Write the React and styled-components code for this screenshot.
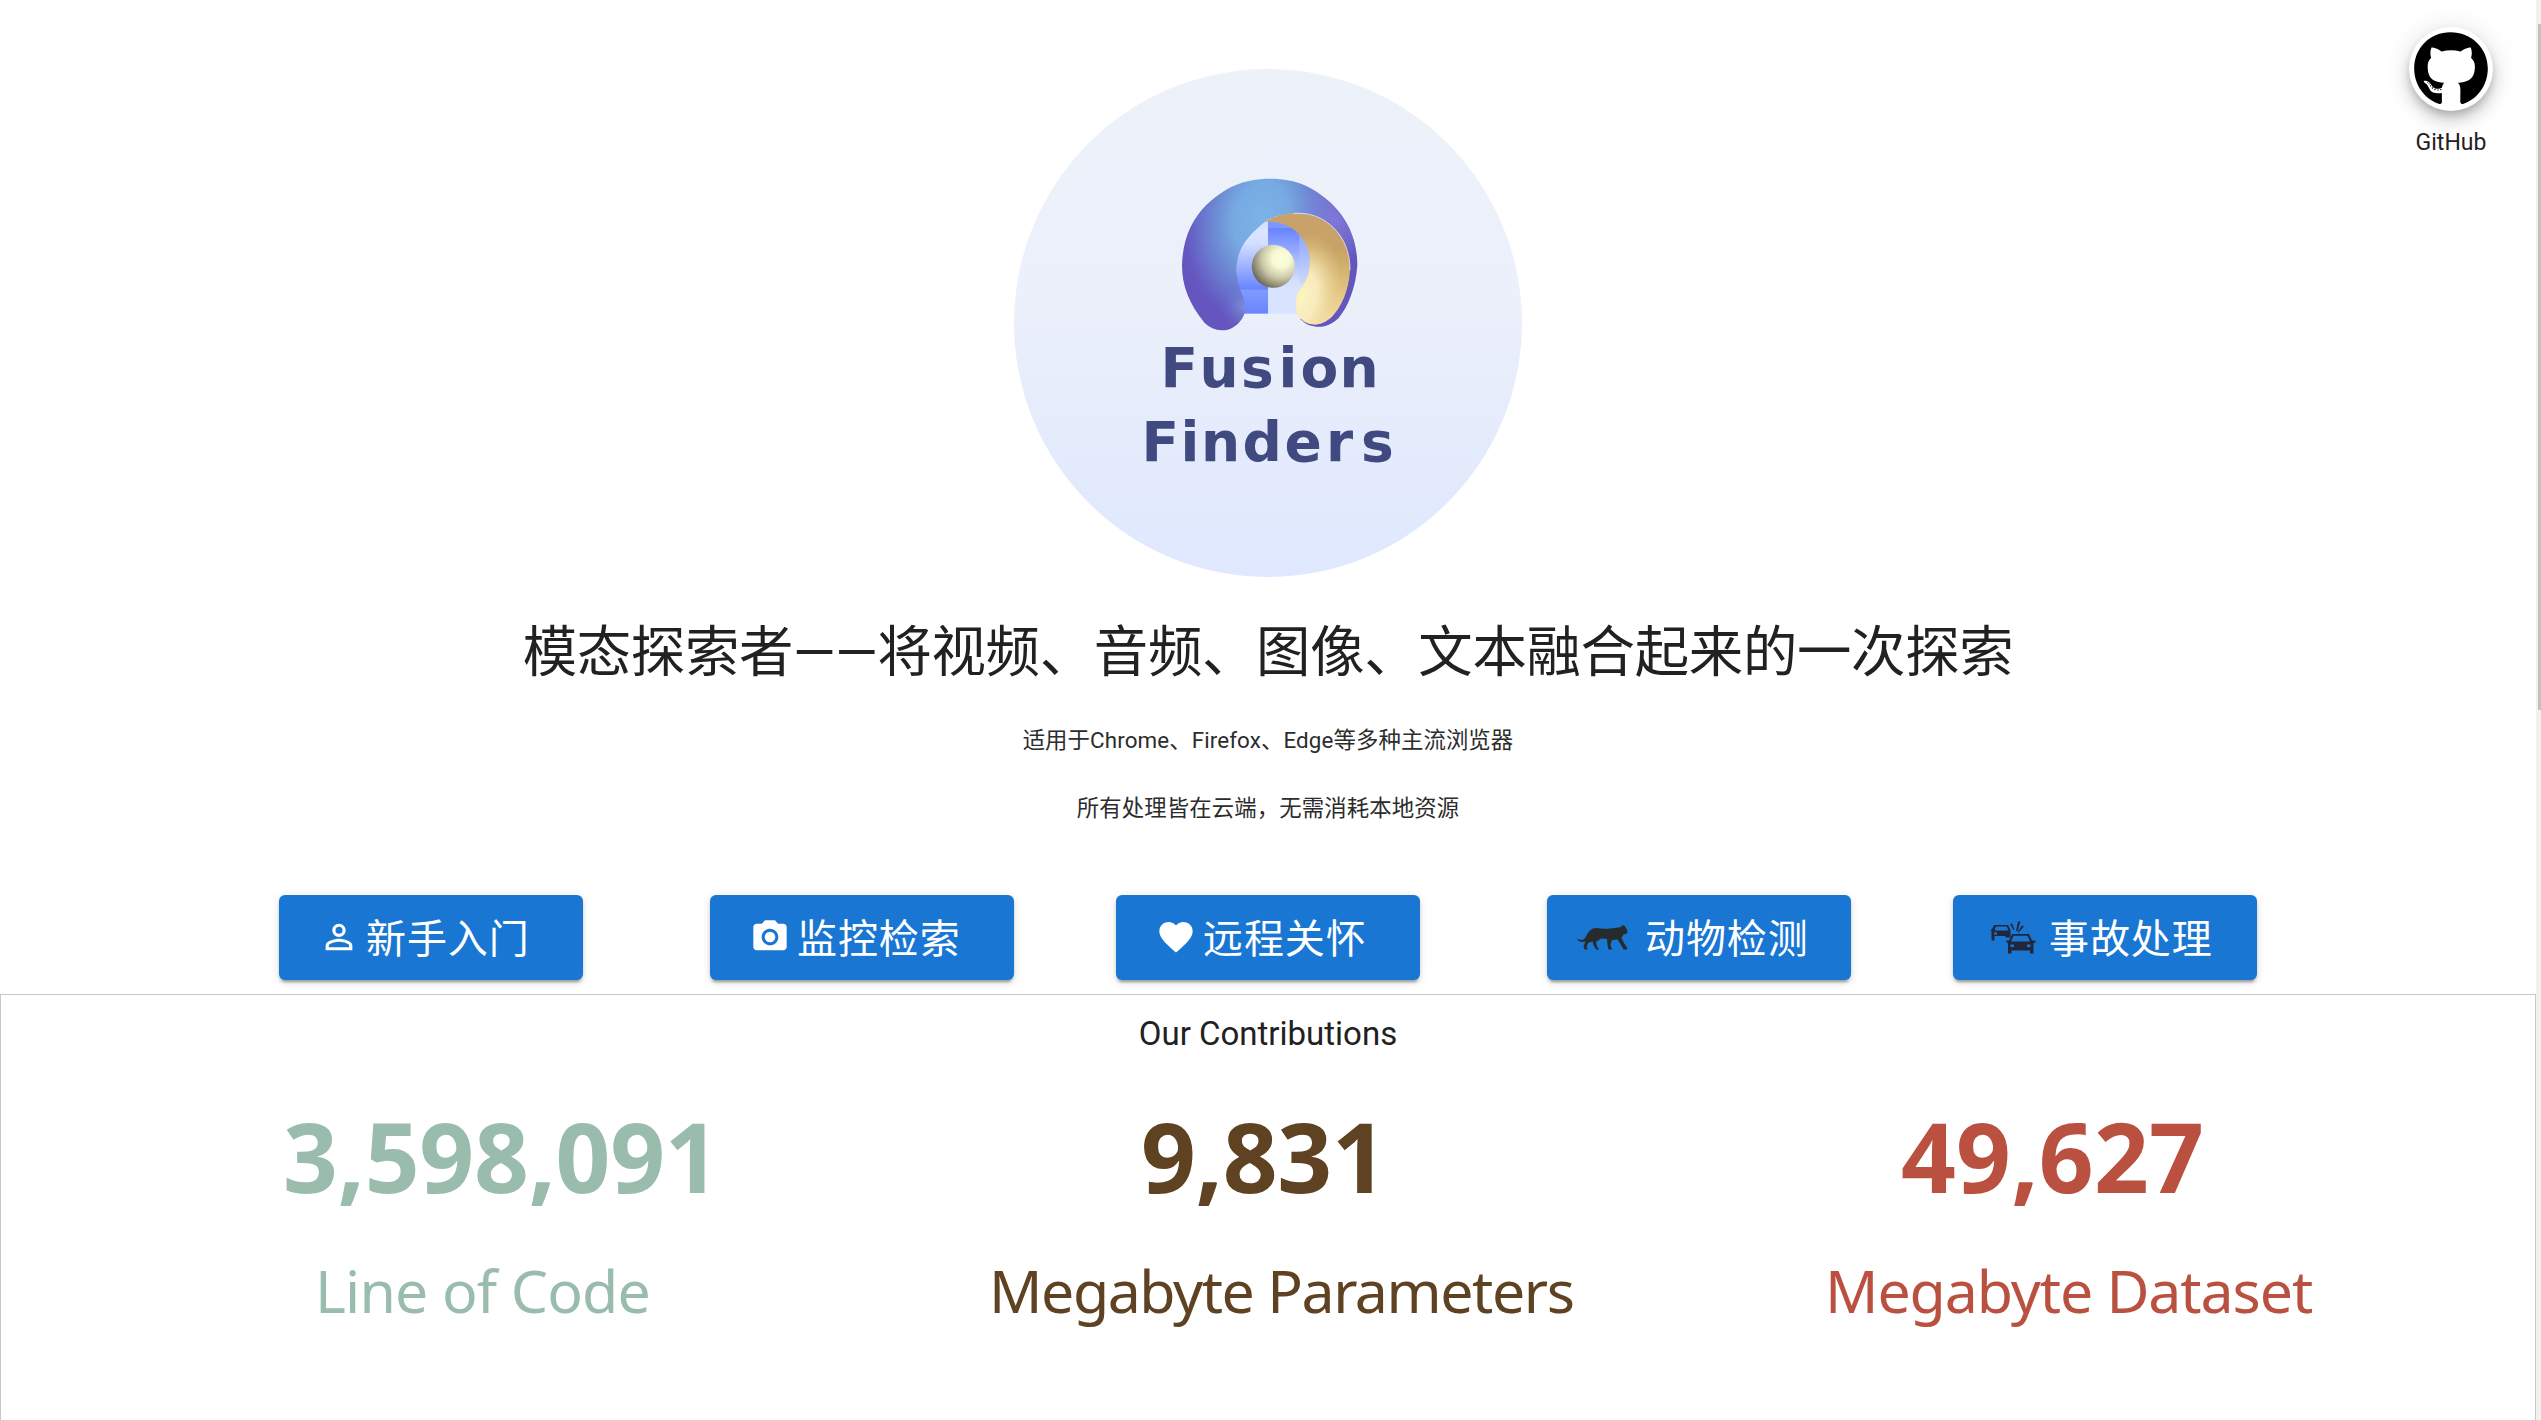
import React from "react";
import styled, { createGlobalStyle } from "styled-components";
import { FaGithub } from "react-icons/fa";
import { MdPersonOutline, MdCameraAlt, MdFavorite } from "react-icons/md";

const GlobalStyle = createGlobalStyle`
  * { box-sizing: border-box; }
  html, body { margin: 0; height: 100%; overflow: hidden; background: #fff; }
  #root { height: 100%; }
`;

const Page = styled.div`
  position: relative;
  display: flex;
  width: 100%;
  height: 1420px;
  overflow: hidden;
  color: #212121;
  font-family: Roboto, "Noto Sans CJK SC", sans-serif;
`;

const Content = styled.main`
  flex: 1;
  display: flex;
  flex-direction: column;
  align-items: center;
  padding-top: 69px;
`;

const ScrollTrack = styled.div`
  width: 5px;
  padding: 24px 0 0 2px;
  background: #f1f1f1;
`;

const ScrollThumb = styled.div`
  height: 686px;
  background: #c1c1c1;
`;

const GitHubCorner = styled.a`
  position: absolute;
  top: 27px;
  right: 29px;
  width: 122px;
  display: flex;
  flex-direction: column;
  align-items: center;
  gap: 18px;
  font-size: 23px;
  line-height: 28px;
`;

const RoundButton = styled.span`
  width: 84px;
  height: 84px;
  display: grid;
  place-items: center;
  border-radius: 50%;
  background: #fff;
  color: #000;
  box-shadow: 0 5px 8px -2px rgba(0, 0, 0, 0.2), 0 10px 16px rgba(0, 0, 0, 0.14),
    0 2px 29px rgba(0, 0, 0, 0.12);
`;

const Logo = styled.svg`
  width: 508px;
  height: 508px;
  display: block;
  flex: none;
`;

const LogoText = styled.text`
  font: bold 55px "DejaVu Sans", sans-serif;
  fill: #404980;
`;

const Title = styled.h1`
  margin: 36px 0 0;
  height: 80px;
  font-size: 54.4px;
  line-height: 80px;
  font-weight: 400;
  letter-spacing: -0.3px;
  white-space: nowrap;
`;

const Note = styled.p`
  margin: ${(p) => p.$gap}px 0 0;
  height: 34px;
  color: #2c2c2c;
  font-size: 22.4px;
  line-height: 34px;
  letter-spacing: 0.1px;
`;

const Actions = styled.nav`
  display: flex;
  margin-top: 70px;
`;

const Action = styled.button`
  width: 304px;
  height: 85px;
  margin: 0 ${(p) => p.$after}px 0 0;
  padding: 0 0 0 ${(p) => p.$inset}px;
  display: flex;
  align-items: center;
  gap: ${(p) => p.$gap}px;
  border: 0;
  border-radius: 6px;
  background: #1976d2;
  color: #fff;
  font: 400 40px/1 Roboto, "Noto Sans CJK SC", sans-serif;
  letter-spacing: 0.9px;
  white-space: nowrap;
  box-shadow: 0 5px 2px -3px rgba(0, 0, 0, 0.2), 0 3px 3px rgba(0, 0, 0, 0.14),
    0 2px 8px rgba(0, 0, 0, 0.12);
  svg { flex: none; margin-bottom: 1px; }
`;

const ActionLabel = styled.span`
  padding-top: 5px;
`;

const Contributions = styled.section`
  align-self: stretch;
  flex: 1;
  margin-top: 14px;
  border: 1px solid #c8c8c8;
  border-bottom: 0;
`;

const SectionTitle = styled.h2`
  margin: 13px 0 0;
  text-align: center;
  font-size: 33px;
  line-height: 51px;
  font-weight: 400;
`;

const Stats = styled.div`
  display: flex;
  justify-content: space-between;
  margin-top: 37px;
  padding: 0 220px 0 282px;
`;

const Stat = styled.div`
  display: flex;
  flex-direction: column;
  width: ${(p) => p.$width}px;
  color: ${(p) => p.$color};
  font-family: "Noto Sans", sans-serif;
  white-space: nowrap;
`;

const StatValue = styled.strong`
  padding-left: ${(p) => p.$inset}px;
  font-size: 96px;
  line-height: 120px;
  letter-spacing: ${(p) => p.$spacing}px;
`;

const StatLabel = styled.span`
  margin-top: 31px;
  padding-left: ${(p) => p.$inset}px;
  font-size: 59px;
  line-height: 86px;
  letter-spacing: ${(p) => p.$spacing}px;
`;

function FusionLogo() {
  return (
    <Logo viewBox="0 0 508 508">
      <defs>
        <linearGradient id="disc" x1="0" y1="0" x2="0" y2="1">
          <stop offset="0" stopColor="#ecf1fa" />
          <stop offset="0.45" stopColor="#ebf0fa" />
          <stop offset="0.8" stopColor="#e3eafc" />
          <stop offset="1" stopColor="#dfe8ff" />
        </linearGradient>
        <radialGradient id="ring" gradientUnits="userSpaceOnUse" cx="0" cy="0" r="1" gradientTransform="translate(425 175) rotate(10) scale(245 330)">
          <stop offset="0" stopColor="#7bb3e7" />
          <stop offset="0.34" stopColor="#77aae2" />
          <stop offset="0.65" stopColor="#6a80d0" />
          <stop offset="0.92" stopColor="#6558c1" />
          <stop offset="1" stopColor="#6555be" />
        </radialGradient>
        <radialGradient id="ringGlow" gradientUnits="userSpaceOnUse" cx="640" cy="180" r="130">
          <stop offset="0" stopColor="#8479da" stopOpacity="0.9" />
          <stop offset="1" stopColor="#8090e0" stopOpacity="0" />
        </radialGradient>
        <radialGradient id="footGlow" gradientUnits="userSpaceOnUse" cx="375" cy="440" r="75">
          <stop offset="0" stopColor="#8398e0" stopOpacity="0.8" />
          <stop offset="1" stopColor="#6a70cc" stopOpacity="0" />
        </radialGradient>
        <linearGradient id="gold" gradientUnits="userSpaceOnUse" x1="620" y1="190" x2="590" y2="490">
          <stop offset="0" stopColor="#c8a26a" />
          <stop offset="0.25" stopColor="#c8a365" />
          <stop offset="0.6" stopColor="#deC07c" />
          <stop offset="1" stopColor="#f6e0a8" />
        </linearGradient>
        <radialGradient id="goldGlow" gradientUnits="userSpaceOnUse" cx="0" cy="0" r="1" gradientTransform="translate(545 410) rotate(14) scale(115 190)">
          <stop offset="0" stopColor="#fbf5c0" />
          <stop offset="0.4" stopColor="#f9ecc0" stopOpacity="0.95" />
          <stop offset="1" stopColor="#eacf90" stopOpacity="0" />
        </radialGradient>
        <radialGradient id="ball" gradientUnits="userSpaceOnUse" cx="484" cy="296" r="98">
          <stop offset="0" stopColor="#fdffdd" />
          <stop offset="0.28" stopColor="#f7f8d4" />
          <stop offset="0.6" stopColor="#c9c8a7" />
          <stop offset="0.85" stopColor="#8e8a73" />
          <stop offset="1" stopColor="#686251" />
        </radialGradient>
        <linearGradient id="paneLeft" x1="0" y1="0" x2="0" y2="1">
          <stop offset="0.1" stopColor="#d9e4ff" />
          <stop offset="0.25" stopColor="#d3dfff" />
          <stop offset="1" stopColor="#6783ff" />
        </linearGradient>
        <linearGradient id="paneRight" x1="0" y1="0" x2="0" y2="1">
          <stop offset="0" stopColor="#6783ff" />
          <stop offset="0.85" stopColor="#d3dfff" />
          <stop offset="1" stopColor="#d9e4ff" />
        </linearGradient>
        <linearGradient id="paneFoot" x1="0" y1="0" x2="0" y2="1">
          <stop offset="0" stopColor="#829bff" />
          <stop offset="1" stopColor="#6884ff" />
        </linearGradient>
      </defs>
      <circle cx="254" cy="254" r="254" fill="url(#disc)" />
      <g transform="translate(106 91) scale(0.33333)">
        <rect x="400" y="184" width="44" height="22" fill="#d3e0ff" />
        <rect x="350" y="204" width="94" height="186" fill="url(#paneLeft)" />
        <rect x="360" y="389" width="84" height="72" fill="url(#paneFoot)" />
        <rect x="444" y="182" width="100" height="23" fill="#7d97ff" />
        <rect x="444" y="204" width="126" height="186" fill="url(#paneRight)" />
        <rect x="538" y="220" width="32" height="150" fill="#b9caff" opacity="0.4" />
        <rect x="444" y="389" width="100" height="72" fill="#d8e3ff" />
        {["ring", "ringGlow", "footGlow"].map((fill) => (
          <path
            key={fill}
            fill={`url(#${fill})`}
            d="M305 511C285 510 268 502 254 489C207 431 186 378 186 316C188 240 214 180 258 136C312 84 370 56 450 56C533 56 583 83 636 132C687 183 712 245 712 316C708 380 685 440 656 474C628 502 594 508 558 491L541 478L650 400L650 230L560 162C505 157 464 166 434 186C386 226 350 263 350 328C350 389 376 407 376 446C375 475 343 513 305 511Z"
          />
        ))}
        {["gold", "goldGlow"].map((fill) => (
          <path
            key={fill}
            fill={`url(#${fill})`}
            d="M434 186C486 150 566 153 612 181C667 216 690 270 690 330C687 393 663 442 636 470C606 498 568 503 541 475C521 450 523 412 540 388C562 360 570 338 569 296C566 232 508 178 434 186Z"
          />
        ))}
        <path
          fill="none"
          stroke="#e9e4ea"
          strokeWidth="2.5"
          d="M520 160C560 158 588 166 612 181C667 216 690 270 690 330"
        />
        <circle cx="460" cy="319" r="64.5" fill="url(#ball)" />
      </g>
      <LogoText x="146.5 185.5 227 264.5 286.5 325.5" y="318">Fusion</LogoText>
      <LogoText x="127.500 166.5 187 228.5 270.5 312 347" y="392">Finders</LogoText>
    </Logo>
  );
}

function PantherIcon() {
  return (
    <svg width="52" height="25" viewBox="0 0 52 25" fill="#262b2e">
      <path d="M0.500 13.500Q4 15.500 7.500 14.500C10 13 10.500 9 14 5.500C17 2.500 20 2.500 25 3.500C30 4 35 3.500 39 3L45 2L46.500 0L48 0.500L49.500 2L50.500 4L51.500 6L51 8.500L47.500 9.500L45.500 13L48 18L51 22.500V24.500H47.500L45 20L41.500 14.500L36 15L34.500 20L36 24.500H32.500L31.500 20L31 14L25 13.500L20 17L21 21.500L23.500 24.500H20L17.500 20L16.500 16.500L12 18L10.500 22L12 24.500H8.500L7.500 21.500L9.500 16.500Q3 18 0.500 13.500Z" />
    </svg>
  );
}

function CrashIcon() {
  return (
    <svg width="46" height="33" viewBox="0 0 46 33" fill="#22263a">
      <path fillRule="evenodd" d="M4 4H18L20.500 9V16.500H16L15 15H4.500V19.500H1.500V10L0.500 9.500V8.500H2L4 4ZM6 5.500L4.500 9.500H18.500L16.800 5.500ZM4 11.500V13.500H7V11.500Z" />
      <path fillRule="evenodd" d="M22 13H39L42 19.500H45.500V21.500L43.500 22V32.500H40V29.500H21.500V32.500H18V22L16.500 21.500V19.500H19L22 13ZM23.500 14.800L21 20.500H40L37.500 14.800ZM20.500 23.500V26H24V23.500ZM37 23.500V26H40.500V23.500Z" />
      <path d="M20 3L22 2.500L24.500 8.500L23.500 9ZM28 0.500H30.500L27.500 10H26ZM32 4.500L34 5.500L28.500 11.500L27.500 11Z" />
    </svg>
  );
}

const actions = [
  { label: "新手入门", icon: <MdPersonOutline size={40} />, inset: 40, gap: 7, after: 127 },
  { label: "监控检索", icon: <MdCameraAlt size={40} />, inset: 40, gap: 7, after: 102 },
  { label: "远程关怀", icon: <MdFavorite size={40} />, inset: 40, gap: 7, after: 127 },
  { label: "动物检测", icon: <PantherIcon />, inset: 29, gap: 17, after: 102 },
  { label: "事故处理", icon: <CrashIcon />, inset: 37, gap: 13, after: 0 },
];

const stats = [
  { value: "3,598,091", label: "Line of Code", color: "#9abcad", width: 465, inset: 0, labelInset: 32, valueSpacing: -0.3, labelSpacing: -0.85 },
  { value: "9,831", label: "Megabyte Parameters", color: "#5e4221", width: 590, inset: 152, labelInset: 0, valueSpacing: -0.3, labelSpacing: -1.45 },
  { value: "49,627", label: "Megabyte Dataset", color: "#ba5140", width: 495, inset: 81, labelInset: 5, valueSpacing: 0.2, labelSpacing: -1.1 },
];

export default function App() {
  return (
    <>
      <GlobalStyle />
      <Page>
        <Content>
          <FusionLogo />
          <Title>模态探索者——将视频、音频、图像、文本融合起来的一次探索</Title>
          <Note $gap={30}>适用于Chrome、Firefox、Edge等多种主流浏览器</Note>
          <Note $gap={34}>所有处理皆在云端，无需消耗本地资源</Note>
          <Actions>
            {actions.map((a) => (
              <Action key={a.label} $inset={a.inset} $gap={a.gap} $after={a.after}>
                {a.icon}
                <ActionLabel>{a.label}</ActionLabel>
              </Action>
            ))}
          </Actions>
          <Contributions>
            <SectionTitle>Our Contributions</SectionTitle>
            <Stats>
              {stats.map((s) => (
                <Stat key={s.label} $color={s.color} $width={s.width}>
                  <StatValue $inset={s.inset} $spacing={s.valueSpacing}>{s.value}</StatValue>
                  <StatLabel $inset={s.labelInset} $spacing={s.labelSpacing}>{s.label}</StatLabel>
                </Stat>
              ))}
            </Stats>
          </Contributions>
        </Content>
        <GitHubCorner>
          <RoundButton>
            <FaGithub size={76} />
          </RoundButton>
          GitHub
        </GitHubCorner>
        <ScrollTrack>
          <ScrollThumb />
        </ScrollTrack>
      </Page>
    </>
  );
}
